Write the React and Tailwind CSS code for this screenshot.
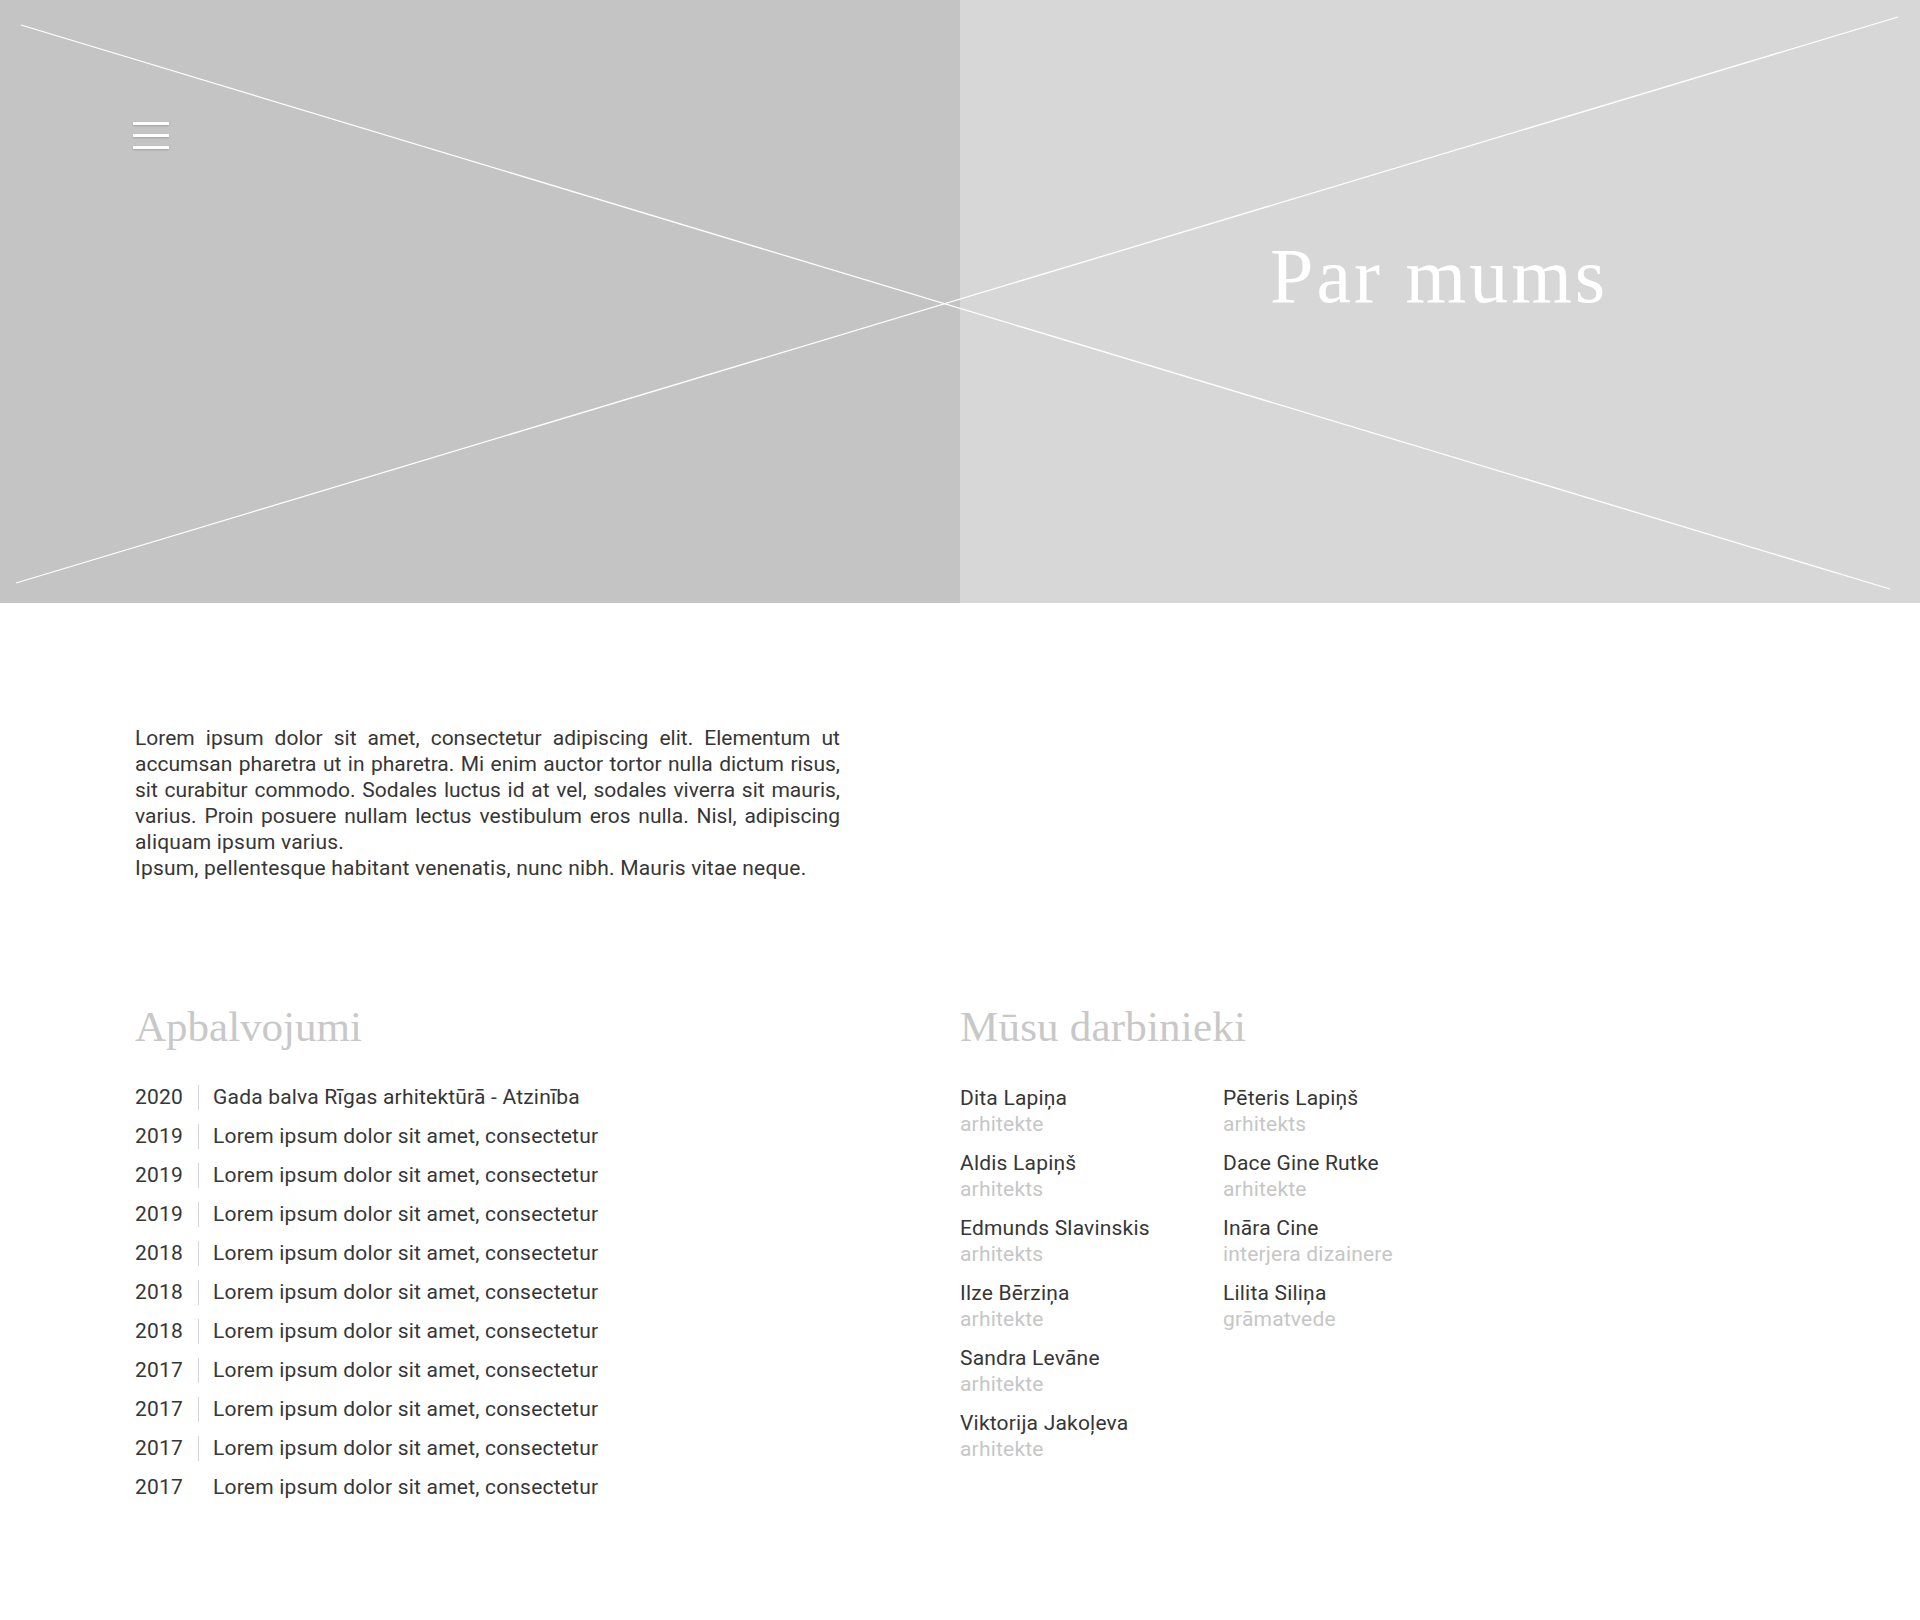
import { Fragment } from 'react'

const INTRO = [
  { text: 'Lorem ipsum dolor sit amet, consectetur adipiscing elit. Elementum ut', justify: true },
  { text: 'accumsan pharetra ut in pharetra. Mi enim auctor tortor nulla dictum risus,', justify: true },
  { text: 'sit curabitur commodo. Sodales luctus id at vel, sodales viverra sit mauris,', justify: true },
  { text: 'varius. Proin posuere nullam lectus vestibulum eros nulla. Nisl, adipiscing', justify: true },
  { text: 'aliquam ipsum varius.' },
  { text: 'Ipsum, pellentesque habitant venenatis, nunc nibh. Mauris vitae neque.' },
]

const AWARDS = [
  ['2020', 'Gada balva Rīgas arhitektūrā - Atzinība'],
  ['2019', 'Lorem ipsum dolor sit amet, consectetur'],
  ['2019', 'Lorem ipsum dolor sit amet, consectetur'],
  ['2019', 'Lorem ipsum dolor sit amet, consectetur'],
  ['2018', 'Lorem ipsum dolor sit amet, consectetur'],
  ['2018', 'Lorem ipsum dolor sit amet, consectetur'],
  ['2018', 'Lorem ipsum dolor sit amet, consectetur'],
  ['2017', 'Lorem ipsum dolor sit amet, consectetur'],
  ['2017', 'Lorem ipsum dolor sit amet, consectetur'],
  ['2017', 'Lorem ipsum dolor sit amet, consectetur'],
  ['2017', 'Lorem ipsum dolor sit amet, consectetur'],
]

const STAFF = [
  [
    ['Dita Lapiņa', 'arhitekte'],
    ['Aldis Lapiņš', 'arhitekts'],
    ['Edmunds Slavinskis', 'arhitekts'],
    ['Ilze Bērziņa', 'arhitekte'],
    ['Sandra Levāne', 'arhitekte'],
    ['Viktorija Jakoļeva', 'arhitekte'],
  ],
  [
    ['Pēteris Lapiņš', 'arhitekts'],
    ['Dace Gine Rutke', 'arhitekte'],
    ['Ināra Cine', 'interjera dizainere'],
    ['Lilita Siliņa', 'grāmatvede'],
  ],
]

const sans = "font-['Roboto','Liberation_Sans',sans-serif]"
const serif = "font-['Liberation_Serif','Times_New_Roman',serif]"

function Hero() {
  return (
    <section className="relative flex h-[603px]">
      <div className="w-1/2 bg-[#c4c4c4] pl-[133px] pt-[122px]">
        <button className="flex w-9 flex-col gap-[9px]">
          <span className="h-[3px] w-full bg-white shadow-[0_1px_2px_rgba(0,0,0,0.18)]" />
          <span className="h-[3px] w-full bg-white shadow-[0_1px_2px_rgba(0,0,0,0.18)]" />
          <span className="h-[3px] w-full bg-white shadow-[0_1px_2px_rgba(0,0,0,0.18)]" />
        </button>
      </div>
      <div className="w-1/2 bg-[#d7d7d7] pl-[310px] pt-[237px]">
        <h1 className={`${serif} relative z-10 text-[78px] leading-none tracking-[3px] text-white`}>Par mums</h1>
      </div>
      {/* placeholder image cross */}
      <svg className="pointer-events-none absolute inset-0 h-full w-full" viewBox="0 0 1920 603" preserveAspectRatio="none">
        <line x1="21" y1="25" x2="1890" y2="589" stroke="#fff" strokeWidth="1.3" />
        <line x1="16" y1="583" x2="1898" y2="17" stroke="#fff" strokeWidth="1.3" />
      </svg>
    </section>
  )
}

export default function App() {
  return (
    <div className={`${sans} min-h-[1620px] bg-white text-[#363636]`}>
      <Hero />

      <main className="px-[135px]">
        <div className="mt-[122px] w-[705px] text-[21px] leading-[26px]">
          {INTRO.map((l, i) => (
            <div key={i} className={l.justify ? 'whitespace-nowrap text-justify [text-align-last:justify]' : 'whitespace-nowrap tracking-[0.2px]'}>
              {l.text}
            </div>
          ))}
        </div>

        <div className="mt-[121px] flex">
          <section className="w-[825px]">
            <h2 className={`${serif} text-[43px] leading-[50px] text-[#c8c8c8]`}>Apbalvojumi</h2>
            <ul className="mt-[26px] tracking-[0.2px]">
              {AWARDS.map(([year, title], i) => (
                <li key={i} className="flex h-[39px] items-center text-[21px]">
                  <span className="w-[47px] text-center">{year}</span>
                  <span className={i < AWARDS.length - 1 ? 'ml-[16px] h-[25px] w-px bg-[#d3d7dc]' : 'ml-[16px] h-[25px] w-px'} />
                  <span className="ml-[14px]">{title}</span>
                </li>
              ))}
            </ul>
          </section>

          <section>
            <h2 className={`${serif} text-[43px] leading-[50px] tracking-[0.2px] text-[#c8c8c8]`}>Mūsu darbinieki</h2>
            <div className="mt-[33px] flex tracking-[0.2px]">
              {STAFF.map((col, c) => (
                <div key={c} className="flex w-[263px] flex-col gap-[13px]">
                  {col.map(([name, role]) => (
                    <Fragment key={name}>
                      <div className="text-[21px] leading-[26px]">
                        <div>{name}</div>
                        <div className="text-[#c6c6c6]">{role}</div>
                      </div>
                    </Fragment>
                  ))}
                </div>
              ))}
            </div>
          </section>
        </div>
      </main>
    </div>
  )
}
